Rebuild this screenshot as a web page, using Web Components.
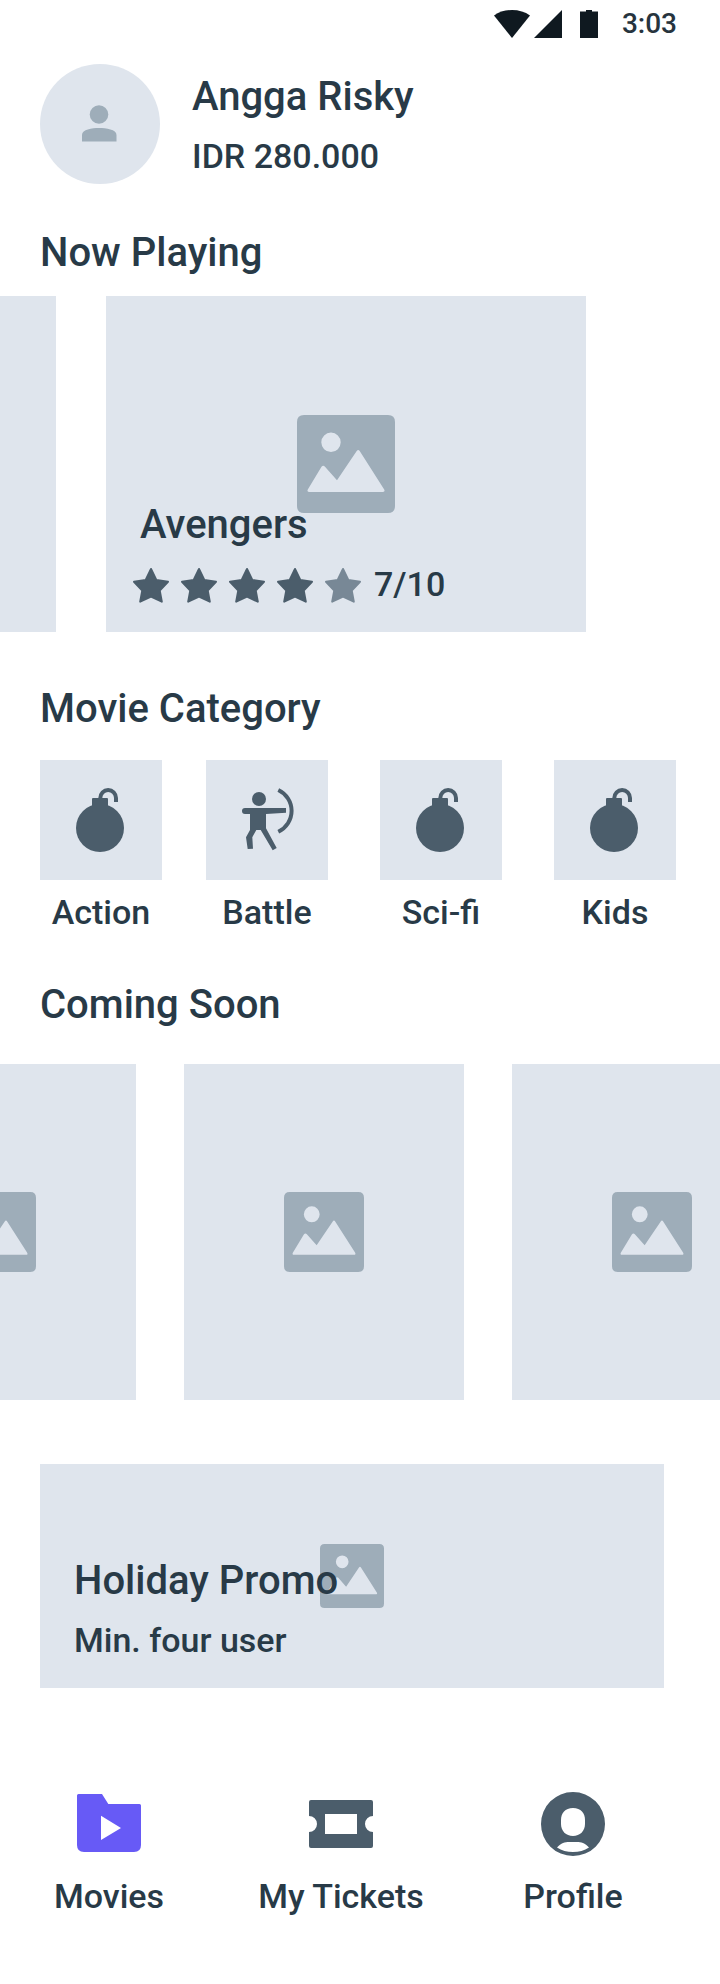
<!DOCTYPE html>
<html lang="en">
<head>
<meta charset="utf-8">
<meta name="viewport" content="width=device-width, initial-scale=1">
<title>Movies</title>
<style>
  :root {
    --ink: #283a47;
    --icon: #4b5d6b;
    --accent: #675af6;
    --surface: #dfe5ed;
    --muted: #9eadb9;
    --gutter: 40px;
  }
  body {
    margin: 0;
    background: #fff;
    color: var(--ink);
    font: 500 34px/40px Roboto, "Liberation Sans", sans-serif;
  }
</style>
</head>
<body>
<movie-app></movie-app>

<script>
  const base = `
    * { box-sizing: border-box; }
    :host { display: block; }
    h1, h2, h3, p, ul { margin: 0; padding: 0; font: inherit; }
    h1, h2, h3 { font-size: 40px; line-height: 50px; }
    a { color: inherit; text-decoration: none; }
    svg { display: block; }
  `;

  function define(name, css, html) {
    customElements.define(name, class extends HTMLElement {
      constructor() {
        super();
        const markup = typeof html === "function" ? html(this) : html;
        this.attachShadow({ mode: "open" }).innerHTML = `<style>${base}${css}</style>${markup}`;
      }
    });
  }

  const icons = {
    bomb: `<circle cx="60" cy="68" r="24"/><rect x="52" y="38" width="16" height="14" rx="1"/>
      <path d="M60.300 39V38A7.800 8 0 0 1 76 38V42" fill="none" stroke="currentColor" stroke-width="4"/>`,
    archer: `<circle cx="53" cy="39" r="7"/>
      <path d="M39 48H80V52.700L60 54V68.300L70.700 88L66.700 90.300L54.700 70H50.300L46.300 77.300L47 88.700L41.700 89L40 77.300L44 70V54H39A3 3 0 0 1 39 48Z"/>
      <path d="M72.300 30A23 23 0 0 1 72.300 71.700" fill="none" stroke="currentColor" stroke-width="4"/>`,
    movies: `<path fill-rule="evenodd" d="M1.500 2H25L31.300 12H62.500Q64 12 64 13.500V53Q64 60 57 60H7Q0 60 0 53V3.500Q0 2 1.500 2ZM24 23.700V48L44 36Z"/>`,
    tickets: `<path fill-rule="evenodd" d="M2 8H62Q64 8 64 10V24A8 8 0 0 0 64 40V54Q64 56 62 56H2Q0 56 0 54V40A8 8 0 0 0 0 24V10Q0 8 2 8ZM16 22V42H48V22Z"/>`,
    profile: `<path fill-rule="evenodd" d="M32 0A32 32 0 1 1 32 64A32 32 0 1 1 32 0ZM32 16C24 16 20 21 20 28V32C20 39 25 44 32 44S44 39 44 32V28C44 21 40 16 32 16ZM16 55.500Q23 60 32 60T48 55.500C44 51 40 50 36 50H28C24 50 20 51 16 55.500Z"/>`
  };

  define("picture-icon", `
    :host { width: var(--size, 80px); height: var(--size, 80px); color: var(--muted); }
    svg { width: 100%; height: 100%; }
  `, `<svg viewBox="0 0 98 98" fill="currentColor" aria-hidden="true">
      <path fill-rule="evenodd" d="M7 0H91Q98 0 98 7V91Q98 98 91 98H7Q0 98 0 91V7Q0 0 7 0ZM34 17.600A9.700 9.700 0 1 0 34 37A9.700 9.700 0 1 0 34 17.600ZM24.500 51.800L10.800 74.500Q9.700 77 12 77H86Q88.300 77 87.200 74.500L62.700 36Q61.200 34 59.700 36L40 65.300L28 51.800Q26.200 49.800 24.500 51.800Z"/>
    </svg>`);

  define("status-bar", `
    :host { display: flex; justify-content: flex-end; align-items: center; gap: 24px;
      height: 48px; padding-right: 43px; font-size: 28px; color: #27343e; }
    svg { color: #0f1920; }
  `, `<svg width="104" height="28" viewBox="0 0 104 28" fill="currentColor" role="img" aria-label="Wi-Fi, mobile signal and battery full">
      <path d="M0 5.500Q7.500 0 18 0T36 5.500L18 28Z"/><path d="M68 0V28H40Z"/>
      <path d="M92 0H98V1.500H104V28H86V1.500H92Z"/>
    </svg><time><slot></slot></time>`);

  define("user-summary", `
    :host { display: flex; align-items: center; gap: 32px; padding: 16px var(--gutter) 0; }
    svg { flex: none; color: var(--muted); background: var(--surface); border-radius: 50%; }
    .text { display: grid; gap: 14px; }
  `, `<svg width="120" height="120" viewBox="0 0 120 120" fill="currentColor" role="img" aria-label="Avatar">
      <circle cx="59" cy="50.500" r="9.300"/><path d="M42 77.500V71C42 65.500 52 64 59 64S76.500 65.500 76.500 71V77.500Z"/>
    </svg>
    <div class="text"><h1><slot name="name"></slot></h1><p><slot name="balance"></slot></p></div>`);

  define("page-section", `
    :host { margin-top: var(--before, 48px); }
    h2 { padding: 0 var(--gutter); margin-bottom: var(--after, 26px); }
  `, el => `<h2>${el.getAttribute("heading")}</h2><slot></slot>`);

  define("card-carousel", `
    :host { overflow: hidden; }
    .track { display: flex; gap: var(--gap, 48px); margin-left: var(--scroll, 0); }
  `, `<div class="track"><slot></slot></div>`);

  define("movie-card", `
    :host { position: relative; flex: none; width: var(--card-width, 280px); height: 336px; background: var(--surface); }
    picture-icon { position: absolute; inset: 0; margin: auto; }
    .info { position: relative; display: flex; flex-direction: column; justify-content: flex-end;
      height: 100%; padding: 0 24px 28px; }
  `, `<picture-icon></picture-icon><div class="info"><slot></slot></div>`);

  define("movie-rating", `
    :host { display: grid; gap: 14px; }
    h3 { padding-left: 10px; }
    .row { display: flex; align-items: center; gap: 12px; }
    .stars { display: flex; gap: 8px; color: var(--icon); }
    .off { color: #788896; }
  `, el => {
    const filled = Number(el.getAttribute("stars"));
    const star = i => `<svg class="${i < filled ? "on" : "off"}" width="40" height="40" viewBox="0 0 40 40"
      fill="currentColor" stroke="currentColor" stroke-width="2" stroke-linejoin="round" aria-hidden="true">
      <path d="M21 5L26.300 16L38 17.700L29.700 26.500L31.800 37.700L21 32.700L10.200 37.700L12.300 26.500L4 17.700L15.700 16Z"/></svg>`;
    return `<h3><slot name="title"></slot></h3>
      <div class="row"><div class="stars">${[0, 1, 2, 3, 4].map(star).join("")}</div><slot name="score"></slot></div>`;
  });

  define("category-grid", `
    :host { display: grid; grid-template-columns: 166fr 174fr 174fr 122fr; padding: 0 44px 0 var(--gutter); }
  `, `<slot></slot>`);

  define("category-tile", `
    :host { width: 122px; }
    a { display: grid; gap: 12px; text-align: center; }
    svg { background: var(--surface); color: var(--icon); }
  `, el => `<a href="#category"><svg width="122" height="120" viewBox="0 0 122 120" fill="currentColor" aria-hidden="true">${icons[el.getAttribute("icon")]}</svg><span><slot></slot></span></a>`);

  define("promo-banner", `
    :host { position: relative; margin: 64px 56px 0 var(--gutter); background: var(--surface); }
    picture-icon { --size: 64px; position: absolute; inset: 0; margin: auto; }
    .text { position: relative; display: grid; gap: 14px; padding: 92px 34px 28px; }
  `, `<picture-icon></picture-icon>
    <div class="text"><h2><slot name="title"></slot></h2><p><slot name="detail"></slot></p></div>`);

  define("tab-bar", `
    nav { display: grid; grid-template-columns: 218fr 246fr 218fr; padding: 104px 38px 68px 0; }
  `, `<nav aria-label="Main"><slot></slot></nav>`);

  define("tab-item", `
    a { display: grid; justify-items: center; gap: 20px; }
    svg { color: var(--icon); }
    :host([current]) svg { color: var(--accent); }
  `, el => `<a href="#${el.getAttribute("icon")}"><svg width="64" height="64" viewBox="0 0 64 64" fill="currentColor" aria-hidden="true">${icons[el.getAttribute("icon")]}</svg><span><slot></slot></span></a>`);

  define("movie-app", `
    .playing { --before: 44px; --after: 18px; --gap: 50px; --scroll: -424px; --card-width: 480px; --size: 98px; }
    .category { --before: 52px; }
    .soon { --after: 34px; --scroll: -144px; }
  `, `
    <status-bar>3:03</status-bar>
    <main>
      <user-summary><span slot="name">Angga Risky</span><span slot="balance">IDR 280.000</span></user-summary>
      <page-section class="playing" heading="Now Playing">
        <card-carousel>
          <movie-card></movie-card>
          <movie-card>
            <movie-rating stars="4"><span slot="title">Avengers</span><span slot="score">7/10</span></movie-rating>
          </movie-card>
        </card-carousel>
      </page-section>
      <page-section class="category" heading="Movie Category">
        <category-grid>
          <category-tile icon="bomb">Action</category-tile>
          <category-tile icon="archer">Battle</category-tile>
          <category-tile icon="bomb">Sci-fi</category-tile>
          <category-tile icon="bomb">Kids</category-tile>
        </category-grid>
      </page-section>
      <page-section class="soon" heading="Coming Soon">
        <card-carousel>
          <movie-card></movie-card><movie-card></movie-card><movie-card></movie-card>
        </card-carousel>
      </page-section>
      <promo-banner><span slot="title">Holiday Promo</span><span slot="detail">Min. four user</span></promo-banner>
    </main>
    <tab-bar>
      <tab-item icon="movies" current>Movies</tab-item>
      <tab-item icon="tickets">My Tickets</tab-item>
      <tab-item icon="profile">Profile</tab-item>
    </tab-bar>
  `);
</script>
</body>
</html>
